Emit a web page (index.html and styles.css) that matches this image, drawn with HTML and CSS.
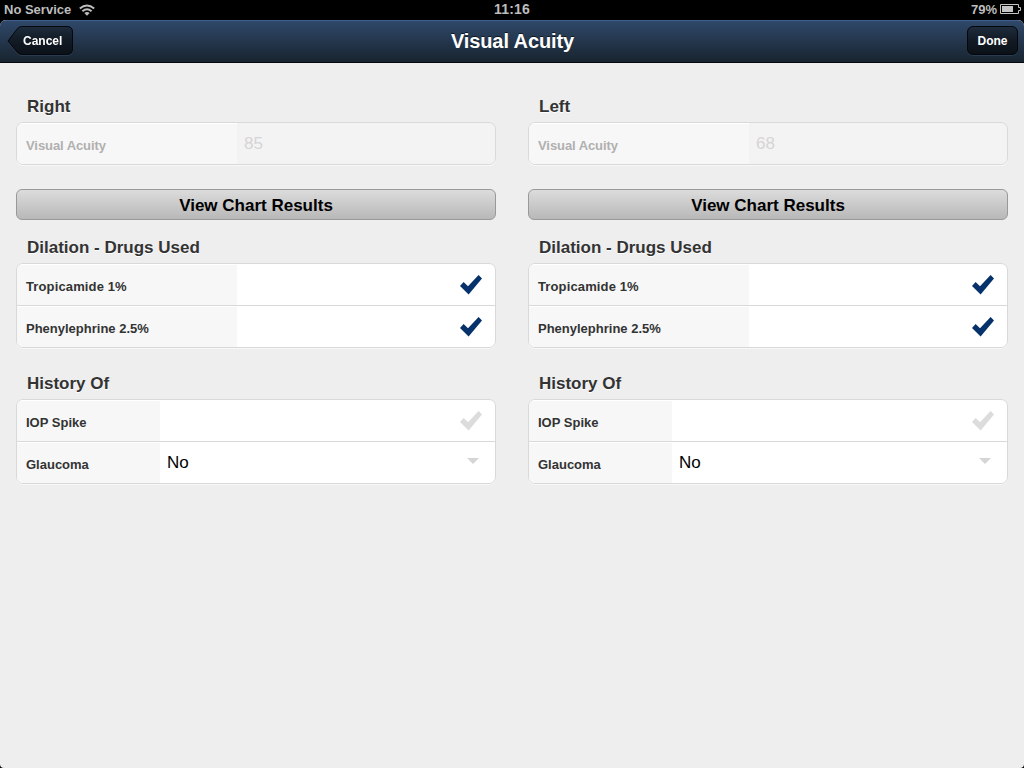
FILE: index.html
```html
<!DOCTYPE html>
<html lang="en">
<head>
<meta charset="utf-8">
<title>Visual Acuity</title>
<link rel="stylesheet" href="styles.css">
</head>
<body>
<svg class="defs" width="0" height="0" aria-hidden="true">
  <symbol id="check" viewBox="0 0 22 20"><path d="M0 11 3.6 7 8 11.2 18.6 0 22 3.4 8.6 19.4Z"/></symbol>
  <symbol id="arrow" viewBox="0 0 12 6"><path d="M0 0H12L6 6Z"/></symbol>
</svg>
<div class="status">
  <div class="carrier"><span class="carrier-name">No Service</span>
    <svg class="wifi" width="16" height="12" viewBox="0 0 16 12"><g fill="none" stroke="#bdbdbd" stroke-width="1.9"><path d="M.8 4.5Q8-1.7 15.2 4.5"/><path d="M3.4 7.3Q8 3.3 12.6 7.3"/></g><path d="M5.3 9Q8 6.8 10.7 9L8 11.7Z" fill="#bdbdbd"/></svg>
  </div>
  <div class="clock">11:16</div>
  <div class="power"><span class="percent">79%</span>
    <svg width="21" height="10" viewBox="0 0 21 10"><path d="M.5.5H18.5V3.5H20.5V6.5H18.5V9.5H.5Z" fill="none" stroke="#c4c4c4"/><path d="M2 2H13V8H2Z" fill="#c4c4c4"/></svg>
  </div>
</div>
<div class="screen">
  <header class="navbar">
    <a class="back"><svg class="back-shape" width="66" height="30" viewBox="0 0 66 30"><defs><linearGradient id="dark" x2="0" y2="1"><stop stop-color="#1e2c3d"/><stop offset=".5" stop-color="#121a24"/><stop offset="1" stop-color="#0b1118"/></linearGradient></defs><path d="M1 15 10 3.2Q12 .5 15 .5H60Q65.5.5 65.5 6V23Q65.5 28.5 60 28.5H15Q12 28.5 10 26Z" fill="url(#dark)" stroke="#04070b"/></svg><span class="back-text">Cancel</span></a>
    <h1 class="title">Visual Acuity</h1>
    <a class="done">Done</a>
  </header>
  <main class="columns">
    <section class="eye">
      <h2 class="heading">Right</h2>
      <div class="group disabled"><div class="row"><div class="label">Visual Acuity</div><div class="value">85</div></div></div>
      <button class="chart">View Chart Results</button>
      <h2 class="heading drugs">Dilation - Drugs Used</h2>
      <div class="group">
        <div class="row"><div class="label trop">Tropicamide 1%</div><div class="value"></div><svg class="check"><use href="#check"/></svg></div>
        <div class="row"><div class="label">Phenylephrine 2.5%</div><div class="value"></div><svg class="check"><use href="#check"/></svg></div>
      </div>
      <h2 class="heading history">History Of</h2>
      <div class="group narrow">
        <div class="row"><div class="label">IOP Spike</div><div class="value"></div><svg class="check off"><use href="#check"/></svg></div>
        <div class="row"><div class="label">Glaucoma</div><div class="value">No</div><svg class="arrow"><use href="#arrow"/></svg></div>
      </div>
    </section>
    <section class="eye">
      <h2 class="heading">Left</h2>
      <div class="group disabled"><div class="row"><div class="label">Visual Acuity</div><div class="value">68</div></div></div>
      <button class="chart">View Chart Results</button>
      <h2 class="heading drugs">Dilation - Drugs Used</h2>
      <div class="group">
        <div class="row"><div class="label trop">Tropicamide 1%</div><div class="value"></div><svg class="check"><use href="#check"/></svg></div>
        <div class="row"><div class="label">Phenylephrine 2.5%</div><div class="value"></div><svg class="check"><use href="#check"/></svg></div>
      </div>
      <h2 class="heading history">History Of</h2>
      <div class="group narrow">
        <div class="row"><div class="label">IOP Spike</div><div class="value"></div><svg class="check off"><use href="#check"/></svg></div>
        <div class="row"><div class="label">Glaucoma</div><div class="value">No</div><svg class="arrow"><use href="#arrow"/></svg></div>
      </div>
    </section>
  </main>
</div>
</body>
</html>
```
FILE: styles.css
```css
* { box-sizing: border-box; }
body { margin: 0; width: 1024px; height: 768px; overflow: hidden; display: flex; flex-direction: column; background: #000; font-family: "Liberation Sans", Arial, sans-serif; }
.defs { position: absolute; }
.status { height: 20px; flex: none; display: grid; grid-template-columns: 1fr auto 1fr; padding: 0 4px; color: #bdbdbd; font-weight: bold; font-size: 13px; line-height: 20px; }
.carrier { display: flex; align-items: center; gap: 8px; }
.wifi { margin-top: -1px; }
.clock { font-size: 14px; line-height: 19px; letter-spacing: .2px; }
.power { display: flex; align-items: center; justify-content: flex-end; gap: 3px; margin-right: -1px; }
.power svg { margin-top: -2px; }
.screen { flex: 1; background: #eee; border-radius: 6px 6px 4px 4px; overflow: hidden; }
.navbar { height: 43px; display: grid; grid-template-columns: 1fr auto 1fr; align-items: start; padding: 6px 6px 0 7px; background: linear-gradient(#2f4869, #18242f); border-top: 1px solid #3f5f8f; border-bottom: 1px solid #05090d; color: #fff; }
.back { display: grid; width: 66px; height: 30px; margin-top: -1px; filter: drop-shadow(0 1px 0 #2a3b50); }
.back-shape, .back-text { grid-area: 1 / 1; }
.back-text { padding-left: 16px; font-size: 12px; font-weight: bold; line-height: 30px; }
.title { margin: 0; font-size: 20px; line-height: 29px; letter-spacing: -.1px; text-shadow: 0 -1px 0 #101820; }
.done { justify-self: end; width: 51px; height: 29px; margin-top: -1px; border: 1px solid #04070b; border-radius: 6px; background: linear-gradient(#1e2c3d, #121a24 50%, #0b1118); box-shadow: 0 1px 0 #2a3b50; font-size: 12px; font-weight: bold; line-height: 28px; text-align: center; }
.columns { display: grid; grid-template-columns: 480px 480px; gap: 32px; padding: 33px 16px 0; }
.heading { height: 26px; margin: 0; padding-left: 11px; color: #333; font-size: 17px; line-height: 22px; text-shadow: 0 1px 0 #fff; }
.drugs { margin-top: 17px; }
.history { margin-top: 25px; }
.group { border: 1px solid #d9d9d9; border-radius: 7px; background: #fff; overflow: hidden; box-shadow: 0 1px 0 #f8f8f8; }
.row { height: 41px; display: grid; grid-template-columns: 220px 1fr auto; grid-template-rows: 41px; }
.narrow .row { grid-template-columns: 143px 1fr auto; }
.row + .row { height: 42px; border-top: 1px solid #d9d9d9; }
.label { padding: 3px 0 0 9px; background: #f7f7f7; box-shadow: inset 0 1px 0 #fff; color: #333; font-size: 13px; font-weight: bold; line-height: 40px; height: 41px; white-space: nowrap; }
.trop { letter-spacing: .13px; }
.value { padding-left: 7px; font-size: 17px; line-height: 41px; color: #000; }
.disabled { background: #f3f3f3; }
.disabled .label { color: #b0b0b0; letter-spacing: -.08px; }
.disabled .value { color: #d5d5d5; }
.check { width: 22px; height: 20px; margin: 11px 13px 0 0; fill: #05326a; }
.off { fill: #dcdcdc; }
.arrow { width: 12px; height: 6px; margin: 16px 16px 0 0; fill: #d5d5d5; }
.chart { display: block; width: 100%; height: 31px; margin: 24px 0 0; padding: 2px 0 0; border: 1px solid #999; border-radius: 6px; background: linear-gradient(#dcdcdc, #b8b8b8); color: #000; font: bold 17px/27px "Liberation Sans", Arial, sans-serif; }
```
